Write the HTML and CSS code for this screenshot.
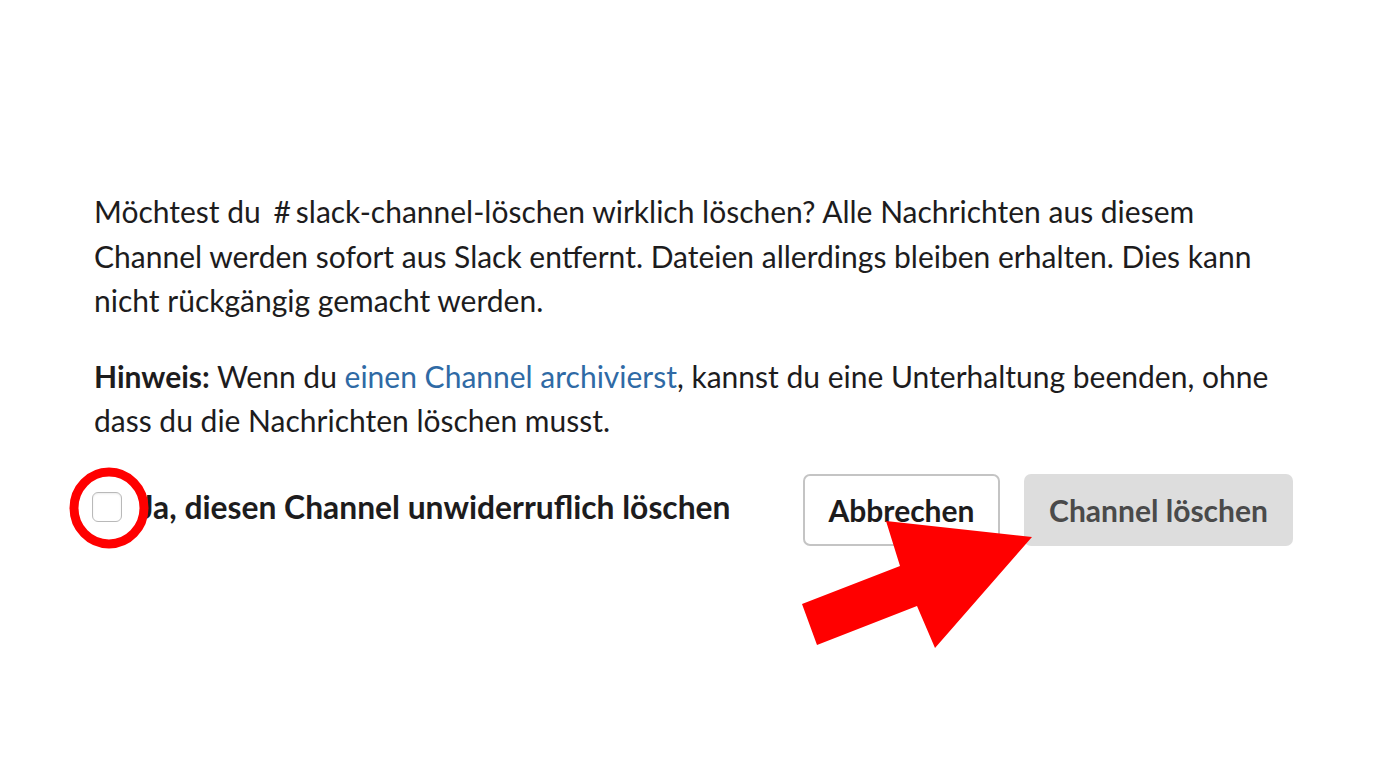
FILE: index.html
```html
<!DOCTYPE html>
<html lang="de">
<head>
<meta charset="utf-8">
<title>Channel löschen</title>
<link rel="stylesheet" href="styles.css">
</head>
<body>
<div class="page">
  <div class="dialog">
    <p class="para">Möchtest du <span class="chan"><span class="hash">#</span>slack-channel-löschen</span> wirklich löschen? Alle Nachrichten aus diesem Channel werden sofort aus Slack entfernt. Dateien allerdings bleiben erhalten. Dies kann nicht rückgängig gemacht werden.</p>
    <p class="para"><strong>Hinweis:</strong> Wenn du <a class="link" href="#">einen Channel archivierst</a>, kannst du eine Unterhaltung beenden, ohne dass du die Nachrichten löschen musst.</p>
    <div class="actions">
      <label class="confirm">
        <span class="checkbox"></span>
        <span class="confirm-text">Ja, diesen Channel unwiderruflich löschen</span>
      </label>
      <div class="buttons">
        <button class="btn btn-cancel" type="button">Abbrechen</button>
        <button class="btn btn-delete" type="button">Channel löschen</button>
      </div>
    </div>
  </div>
  <svg class="overlay" width="1379" height="776" viewBox="0 0 1379 776" aria-hidden="true">
    <ellipse cx="109" cy="508" rx="35" ry="36" fill="none" stroke="#ff0000" stroke-width="9"/>
    <polygon points="1032,537 886,521 900,566 802,604 817,645 917,606 935,648" fill="#ff0000"/>
  </svg>
</div>
</body>
</html>
```
FILE: styles.css
```css
html, body {
  margin: 0;
  padding: 0;
  background: #ffffff;
}
.page {
  position: relative;
  width: 1379px;
  height: 776px;
  overflow: hidden;
}
.dialog {
  padding: 189px 0 0 94px;
  width: 1199px;
  font-family: Lato, "Noto Sans", sans-serif;
  font-size: 30px;
  line-height: 44.5px;
  color: #1d1c1d;
}
.para {
  margin: 0 0 31px 0;
}
.para strong {
  font-weight: 700;
}
.chan {
  margin-left: 5px;
}
.hash {
  margin-right: 5px;
}
.link {
  color: #2f6aa5;
  text-decoration: none;
}
.actions {
  display: flex;
  align-items: center;
  justify-content: space-between;
  margin-top: 30px;
}
.confirm {
  display: flex;
  align-items: center;
  gap: 18px;
  font-weight: 700;
  font-size: 31.8px;
  margin-top: -5px;
  margin-left: -2px;
}
.checkbox {
  width: 28px;
  height: 28px;
  border: 1px solid #b9b9b9;
  border-radius: 6px;
  background: #fff;
  box-shadow: inset 0 1px 2px rgba(0,0,0,0.08);
  flex: none;
}
.buttons {
  display: flex;
  gap: 24px;
}
.btn {
  font-family: Lato, "Noto Sans", sans-serif;
  font-size: 30px;
  font-weight: 700;
  height: 72px;
  border-radius: 7px;
  padding: 0 16px;
  cursor: pointer;
}
.btn-cancel {
  background: #ffffff;
  border: 2px solid #c4c4c4;
  color: #1d1c1d;
  width: 197px;
}
.btn-delete {
  background: #dddddd;
  border: none;
  color: #4a4a4a;
  width: 269px;
}
.overlay {
  position: absolute;
  left: 0;
  top: 0;
  pointer-events: none;
}
```
